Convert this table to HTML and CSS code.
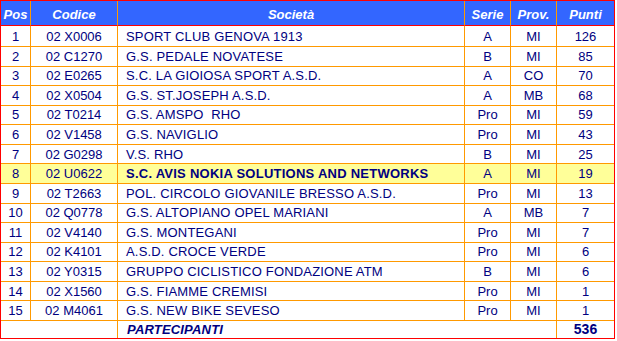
FILE: index.html
```html
<!DOCTYPE html>
<html>
<head>
<meta charset="utf-8">
<link rel="stylesheet" href="styles.css">
</head>
<body>
<div class="tbl">
  <div class="c h">Pos</div><div class="c h">Codice</div><div class="c h">Società</div><div class="c h">Serie</div><div class="c h">Prov.</div><div class="c h last">Punti</div>

  <div class="c">1</div><div class="c">02 X0006</div><div class="c name">SPORT CLUB GENOVA 1913</div><div class="c">A</div><div class="c">MI</div><div class="c last">126</div>
  <div class="c">2</div><div class="c">02 C1270</div><div class="c name">G.S. PEDALE NOVATESE</div><div class="c">B</div><div class="c">MI</div><div class="c last">85</div>
  <div class="c">3</div><div class="c">02 E0265</div><div class="c name">S.C. LA GIOIOSA SPORT A.S.D.</div><div class="c">A</div><div class="c">CO</div><div class="c last">70</div>
  <div class="c">4</div><div class="c">02 X0504</div><div class="c name">G.S. ST.JOSEPH A.S.D.</div><div class="c">A</div><div class="c">MB</div><div class="c last">68</div>
  <div class="c">5</div><div class="c">02 T0214</div><div class="c name">G.S. AMSPO &nbsp;RHO</div><div class="c">Pro</div><div class="c">MI</div><div class="c last">59</div>
  <div class="c">6</div><div class="c">02 V1458</div><div class="c name">G.S. NAVIGLIO</div><div class="c">Pro</div><div class="c">MI</div><div class="c last">43</div>
  <div class="c">7</div><div class="c">02 G0298</div><div class="c name">V.S. RHO</div><div class="c">B</div><div class="c">MI</div><div class="c last">25</div>
  <div class="c hl">8</div><div class="c hl">02 U0622</div><div class="c name hl bold">S.C. AVIS NOKIA SOLUTIONS AND NETWORKS</div><div class="c hl">A</div><div class="c hl">MI</div><div class="c last hl">19</div>
  <div class="c">9</div><div class="c">02 T2663</div><div class="c name">POL. CIRCOLO GIOVANILE BRESSO A.S.D.</div><div class="c">Pro</div><div class="c">MI</div><div class="c last">13</div>
  <div class="c">10</div><div class="c">02 Q0778</div><div class="c name">G.S. ALTOPIANO OPEL MARIANI</div><div class="c">A</div><div class="c">MB</div><div class="c last">7</div>
  <div class="c">11</div><div class="c">02 V4140</div><div class="c name">G.S. MONTEGANI</div><div class="c">Pro</div><div class="c">MI</div><div class="c last">7</div>
  <div class="c">12</div><div class="c">02 K4101</div><div class="c name">A.S.D. CROCE VERDE</div><div class="c">Pro</div><div class="c">MI</div><div class="c last">6</div>
  <div class="c">13</div><div class="c">02 Y0315</div><div class="c name">GRUPPO CICLISTICO FONDAZIONE ATM</div><div class="c">B</div><div class="c">MI</div><div class="c last">6</div>
  <div class="c">14</div><div class="c">02 X1560</div><div class="c name">G.S. FIAMME CREMISI</div><div class="c">Pro</div><div class="c">MI</div><div class="c last">1</div>
  <div class="c">15</div><div class="c">02 M4061</div><div class="c name">G.S. NEW BIKE SEVESO</div><div class="c">Pro</div><div class="c">MI</div><div class="c last">1</div>

  <div class="c foot span2"></div><div class="c foot name span3 total-label">PARTECIPANTI</div><div class="c foot last total">536</div>
</div>
</body>
</html>
```

FILE: styles.css
```css
html, body {
  margin: 0;
  padding: 0;
  background: #ffffff;
}

.tbl {
  box-sizing: border-box;
  width: 615px;
  height: 339px;
  border: 1px solid #ff0000;
  display: grid;
  grid-template-columns: 30px 87px 347px 46px 46px 57px;
  grid-template-rows: 25px 21px repeat(14, 19.5714px) 17px;
  font-family: "Liberation Sans", Arial, sans-serif;
  font-size: 13px;
  color: #000080;
}

.c {
  box-sizing: border-box;
  border-right: 1px solid #ff9900;
  border-bottom: 1px solid #ff9900;
  display: flex;
  align-items: center;
  justify-content: center;
  white-space: nowrap;
  overflow: hidden;
  line-height: 1;
}

.c.last {
  border-right: none;
}

.h {
  background: #3366ff;
  color: #ffffff;
  font-weight: bold;
  font-style: italic;
  border-bottom: 1px solid #ff0000;
  padding-top: 2px;
}

.name {
  justify-content: flex-start;
  padding-left: 8px;
  letter-spacing: 0.18px;
}

.hl {
  background: #ffff99;
}

.bold {
  font-weight: bold;
  letter-spacing: 0.25px;
}

.foot {
  border-bottom: none;
}

.span2 {
  grid-column: span 2;
}

.span3 {
  grid-column: span 3;
}

.total-label {
  font-weight: bold;
  font-style: italic;
  padding-left: 9px;
}

.total {
  font-weight: bold;
  font-size: 14px;
}
```
